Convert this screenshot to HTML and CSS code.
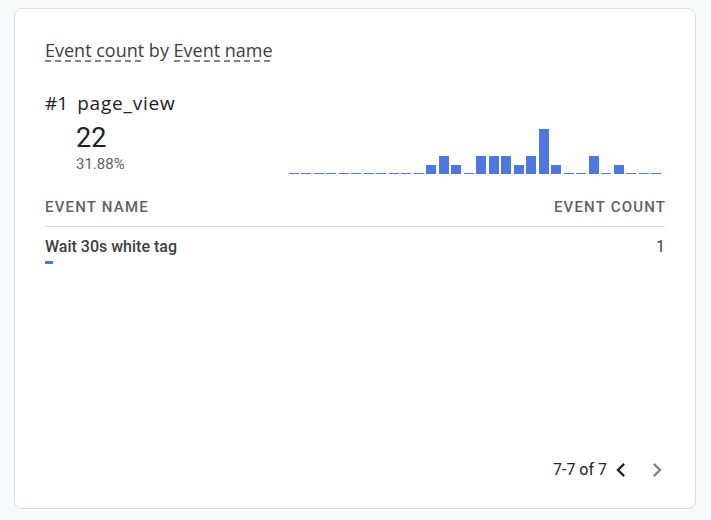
FILE: index.html
```html
<!DOCTYPE html>
<html>
<head>
<meta charset="utf-8">
<link rel="stylesheet" href="styles.css">
</head>
<body>
<div class="card">
  <div class="title"><span class="dotted">Event count</span> by <span class="dotted">Event name</span></div>
  <div class="top"><span class="rank">#1</span><span class="name">page_view</span></div>
  <div class="summary">
    <div class="stats">
      <div class="value">22</div>
      <div class="pct">31.88%</div>
    </div>
    <div class="chart">
      <div class="bar" style="height:0px"></div>
      <div class="bar" style="height:0px"></div>
      <div class="bar" style="height:0px"></div>
      <div class="bar" style="height:0px"></div>
      <div class="bar" style="height:0px"></div>
      <div class="bar" style="height:0px"></div>
      <div class="bar" style="height:0px"></div>
      <div class="bar" style="height:0px"></div>
      <div class="bar" style="height:0px"></div>
      <div class="bar" style="height:0px"></div>
      <div class="bar" style="height:0px"></div>
      <div class="bar" style="height:9px"></div>
      <div class="bar" style="height:18px"></div>
      <div class="bar" style="height:9px"></div>
      <div class="bar" style="height:0px"></div>
      <div class="bar" style="height:18px"></div>
      <div class="bar" style="height:18px"></div>
      <div class="bar" style="height:18px"></div>
      <div class="bar" style="height:9px"></div>
      <div class="bar" style="height:18px"></div>
      <div class="bar" style="height:45px"></div>
      <div class="bar" style="height:9px"></div>
      <div class="bar" style="height:0px"></div>
      <div class="bar" style="height:0px"></div>
      <div class="bar" style="height:18px"></div>
      <div class="bar" style="height:0px"></div>
      <div class="bar" style="height:9px"></div>
      <div class="bar" style="height:0px"></div>
      <div class="bar" style="height:0px"></div>
      <div class="bar" style="height:0px"></div>
    </div>
  </div>
  <div class="thead">
    <span>EVENT NAME</span>
    <span class="th-right">EVENT COUNT</span>
  </div>
  <div class="row">
    <div class="cell-name">
      <div>Wait 30s white tag</div>
      <div class="mini" style="width:8px"></div>
    </div>
    <div class="cell-count">1</div>
  </div>
  <div class="spacer"></div>
  <div class="pager">
    <span class="range">7-7 of 7</span>
    <button class="nav">
      <svg width="28" height="28" viewBox="0 0 24 24"><path d="M15.41 7.41 14 6l-6 6 6 6 1.41-1.41L10.83 12z" fill="#202124"/></svg>
    </button>
    <button class="nav">
      <svg width="28" height="28" viewBox="0 0 24 24"><path d="M10 6 8.59 7.41 13.17 12l-4.58 4.59L10 18l6-6z" fill="#80868b"/></svg>
    </button>
  </div>
</div>
</body>
</html>
```
FILE: styles.css
```css
html, body {
  margin: 0;
  padding: 0;
  background: #f8f9fa;
}
body {
  padding: 8px 16px 11px 14px;
  font-family: Roboto, "Liberation Sans", sans-serif;
}
.card {
  box-sizing: border-box;
  width: 682px;
  height: 501px;
  background: #fff;
  border: 1px solid #dadce0;
  border-radius: 8px;
  padding: 29px 30px 0 30px;
  display: flex;
  flex-direction: column;
}
.title {
  font-family: "Open Sans", sans-serif;
  font-size: 18px;
  color: #3c4043;
  line-height: 24px;
  height: 24px;
}
.dotted {
  background-image: linear-gradient(to right, #80868b 6px, transparent 6px);
  background-size: 10px 2px;
  background-repeat: repeat-x;
  background-position: 0 100%;
}
.top {
  margin-top: 28px;
  font-family: "Open Sans", sans-serif;
  font-size: 19px;
  line-height: 26px;
  color: #202124;
  display: flex;
  gap: 9px;
}
.name {
  letter-spacing: 0.8px;
}
.summary {
  display: flex;
  align-items: flex-end;
  justify-content: space-between;
  padding-left: 31px;
  padding-right: 4px;
}
.stats {
  padding-top: 6px;
}
.value {
  font-size: 27px;
  line-height: 32px;
  color: #202124;
}
.pct {
  font-size: 15px;
  color: #5f6368;
  line-height: 20px;
}
.chart {
  display: flex;
  align-items: flex-end;
  gap: 2.5px;
  height: 48px;
}
.bar {
  width: 10px;
  min-height: 1.5px;
  background: #4f77e1;
}
.thead {
  margin-top: 23px;
  display: flex;
  justify-content: space-between;
  font-size: 15px;
  font-weight: 500;
  letter-spacing: 1.2px;
  color: #5f6368;
  line-height: 20px;
  padding-bottom: 9px;
  border-bottom: 1px solid #dadce0;
}
.th-right {
  margin-right: -1.2px;
}
.row {
  display: flex;
  justify-content: space-between;
  padding-top: 10px;
  font-size: 16px;
  font-weight: 500;
  color: #3c4043;
  line-height: 20px;
}
.mini {
  height: 2.5px;
  background: #4f77e1;
  margin-top: 4px;
}
.cell-count {
  font-weight: 400;
  color: #3c4043;
}
.spacer {
  flex: 1;
}
.pager {
  display: flex;
  align-items: center;
  justify-content: flex-end;
  height: 28px;
  line-height: 28px;
  margin-bottom: 24px;
  margin-right: -6px;
  font-size: 16px;
  color: #202124;
}
.range {
  margin-right: 0;
}
.nav {
  border: 0;
  background: none;
  padding: 0;
  margin: 0;
  width: 28px;
  height: 28px;
  display: flex;
}
.nav + .nav {
  margin-left: 8px;
}
```
